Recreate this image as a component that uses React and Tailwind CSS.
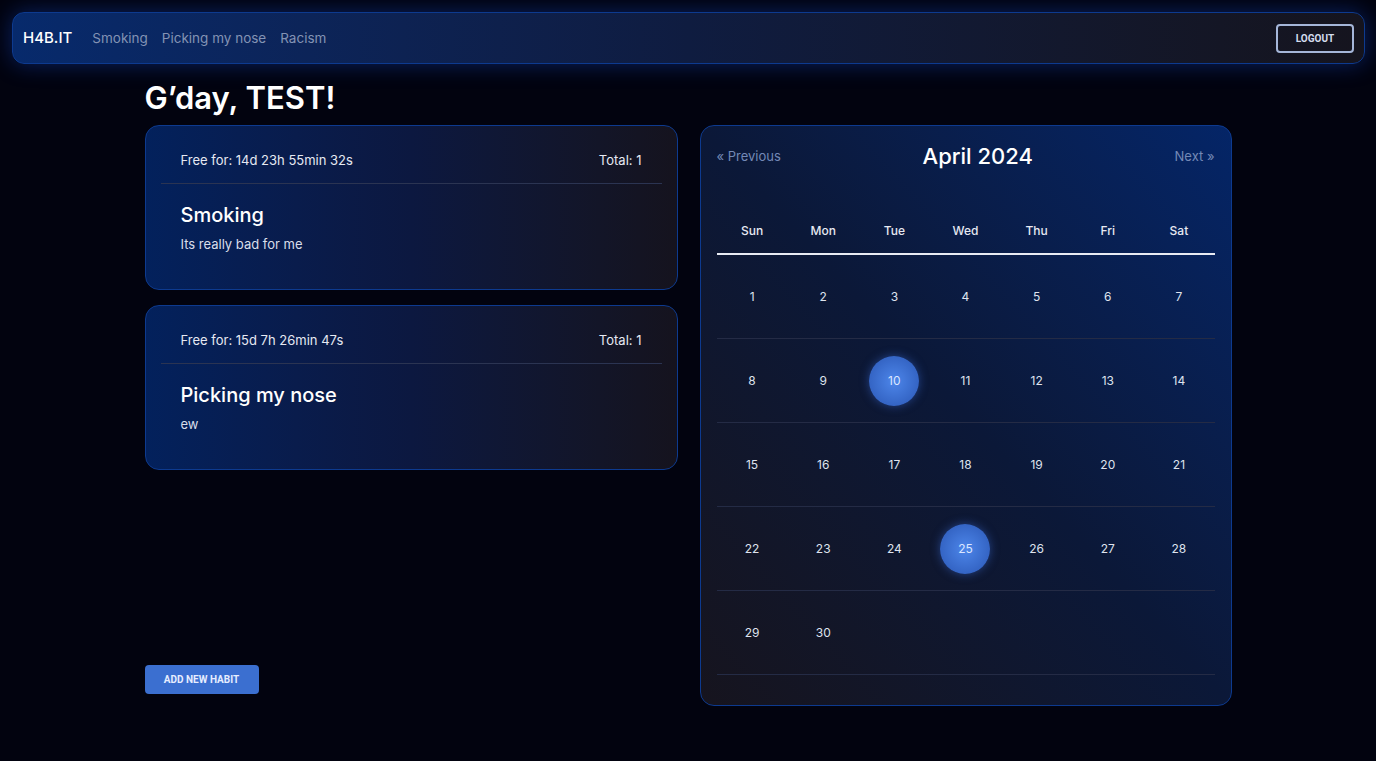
import React from 'react';

const FONT = { fontFamily: 'Inter, "Noto Sans", sans-serif' };

const HABITS = [
  { id: 1, free: 'Free for: 14d 23h 55min 32s', total: 1, name: 'Smoking', description: 'Its really bad for me' },
  { id: 2, free: 'Free for: 15d 7h 26min 47s', total: 1, name: 'Picking my nose', description: 'ew' },
];

const DAYS = ['Sun', 'Mon', 'Tue', 'Wed', 'Thu', 'Fri', 'Sat'];
const MARKED = [10, 25];

const buildWeeks = () => {
  const cells = [];
  for (let d = 1; d <= 30; d++) cells.push(d);
  while (cells.length % 7 !== 0) cells.push(null);
  const weeks = [];
  for (let i = 0; i < cells.length; i += 7) weeks.push(cells.slice(i, i + 7));
  return weeks;
};

const HabitCard = ({ habit }) => (
  <div className="rounded-[14px] border border-[#0d3a8f] bg-linear-to-r from-[#03215c] via-[#0c1840] to-[#15131e] px-[15px] pt-[25px] pb-[35px]">
    <div className="flex items-center justify-between border-b border-[#2b3452] px-5 pb-[12px] text-[13px] text-[#e6e9f2]">
      <span>{habit.free}</span>
      <span>Total: {habit.total}</span>
    </div>
    <div className="px-5 pt-[19px]">
      <h3 className="text-[20px] font-medium leading-6 text-white">{habit.name}</h3>
      <p className="mt-[8px] text-[13px] text-[#d9deea]">{habit.description}</p>
    </div>
  </div>
);

const Calendar = () => {
  const weeks = buildWeeks();
  return (
    <div className="flex flex-col rounded-[14px] border border-[#0d3a8f] bg-linear-to-tr from-[#16141e] via-[#0b1838] to-[#042567] px-4 pt-[14px] pb-[30px]">
      <div className="flex items-center justify-between">
        <button className="text-[13px] text-[#7489b6]">« Previous</button>
        <h2 className="text-[22px] font-medium text-white">April 2024</h2>
        <button className="text-[13px] text-[#7489b6]">Next »</button>
      </div>
      <div className="mt-[49px] grid grid-cols-7 border-b-2 border-[#e8ebf3] pb-[13px]">
        {DAYS.map(d => (
          <div key={d} className="text-center text-[12px] font-medium text-[#e6e9f2]">{d}</div>
        ))}
      </div>
      {weeks.map((week, i) => (
        <div key={i} className="grid h-[84px] grid-cols-7 items-center border-b border-[#242b45]">
          {week.map((day, j) => (
            <div key={j} className="flex justify-center">
              {day && (
                MARKED.includes(day) ? (
                  <span className="flex h-[50px] w-[50px] items-center justify-center rounded-full bg-radial from-[#4d86ea] to-[#2a56b4] text-[12px] text-[#dbe6ff] shadow-[0_0_10px_rgba(60,110,220,0.5)]">{day}</span>
                ) : (
                  <span className="text-[12px] text-[#dfe3ee]">{day}</span>
                )
              )}
            </div>
          ))}
        </div>
      ))}
    </div>
  );
};

export default function App() {
  return (
    <div className="min-h-screen bg-[#02030f] pt-3 text-white" style={FONT}>
      <nav className="ml-3 mr-[11px] flex h-[52px] items-center justify-between rounded-[12px] border border-[#0d3a8f] bg-linear-to-r from-[#072a6c] via-[#0f1c40] to-[#15141e] pl-[10px] pr-[10px] shadow-[0_0_22px_rgba(20,70,200,0.45)]">
        <div className="flex items-center">
          <span className="text-[15px] font-medium text-white">H4B.IT</span>
          <div className="ml-[20px] flex gap-[14px] text-[13.5px] text-[#8393b4]">
            <a>Smoking</a>
            <a>Picking my nose</a>
            <a>Racism</a>
          </div>
        </div>
        <button className="h-[29px] w-[78px] rounded-[4px] border-2 border-[#a5b6d9] text-[10px] font-bold text-[#d4dcee]" style={{ fontFamily: 'Roboto, sans-serif' }}>LOGOUT</button>
      </nav>

      <main className="mx-auto w-[1087px] pb-14">
        <h1 className="mt-[16px] text-[31px] font-semibold leading-[36px] text-white">G’day, TEST!</h1>
        <div className="mt-[9px] flex gap-[22px]">
          <div className="flex w-[533px] flex-col">
            <div className="flex flex-col gap-[15px]">
              {HABITS.map(h => <HabitCard key={h.id} habit={h} />)}
            </div>
            <div className="flex-1" />
            <button className="mb-[12px] h-[29px] w-[114px] rounded-[4px] bg-[#3b6fd0] text-[10px] font-bold text-[#e6edff]" style={{ fontFamily: 'Roboto, sans-serif' }}>ADD NEW HABIT</button>
          </div>
          <div className="w-[532px]">
            <Calendar />
          </div>
        </div>
      </main>
    </div>
  );
}
